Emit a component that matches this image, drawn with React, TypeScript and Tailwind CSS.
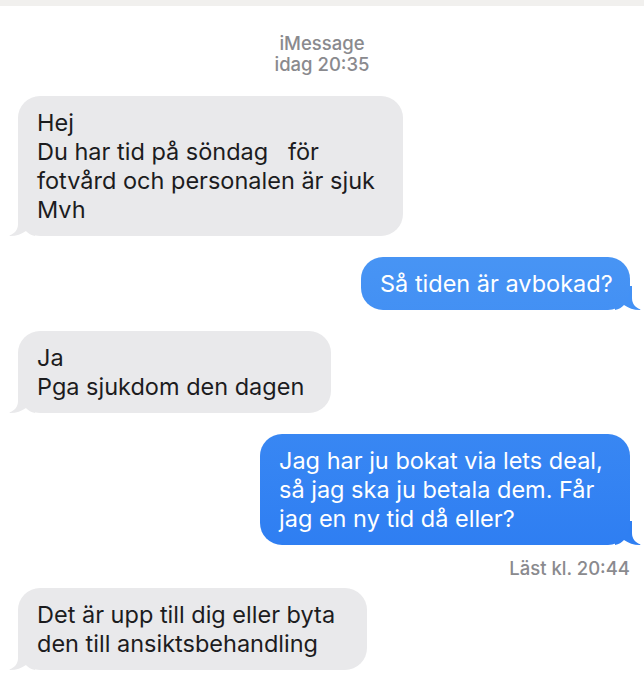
import React from "react";

const font = { fontFamily: "Inter, 'Liberation Sans', Arial, sans-serif" };

function TailLeft() {
  return (
    <svg
      className="absolute bottom-0 left-[-9px]"
      width="26"
      height="24"
      viewBox="0 0 26 24"
    >
      <path
        d="M9 0 L9 12 C9 18 5.5 21.5 1 23.2 C0.3 23.5 0.5 24 1.3 24 C7.5 24 12.5 22 17 19 C19.5 21.5 22 23.3 26 24 L26 0 Z"
        fill="#e9e9eb"
      />
    </svg>
  );
}

function TailRight({ color }: { color: string }) {
  return (
    <svg
      className="absolute bottom-0 right-[-11px]"
      width="26"
      height="24"
      viewBox="0 0 26 24"
    >
      <path
        d="M17 0 L17 12 C17 18 20.5 21.5 25 23.2 C25.7 23.5 25.5 24 24.7 24 C18.5 24 13.5 22 9 19 C6.5 21.5 4 23.3 0 24 L0 0 Z"
        fill={color}
      />
    </svg>
  );
}

function Received({ lines, w }: { lines: string[]; w: string }) {
  return (
    <div className="flex justify-start pl-[18px]">
      <div className={`relative ${w}`}>
        <TailLeft />
        <div className="relative rounded-[22px] bg-[#e9e9eb] px-[19px] py-[12px] text-[23.5px] leading-[29px] text-[#1c1c1e] whitespace-pre">
          {lines.map((l, i) => (
            <div key={i}>{l}</div>
          ))}
        </div>
      </div>
    </div>
  );
}

function Sent({ lines, w, tail }: { lines: string[]; w: string; tail: string }) {
  return (
    <div className="flex justify-end pr-[14px]">
      <div className={`relative ${w}`}>
        <TailRight color={tail} />
        <div className="relative rounded-[22px] bg-fixed bg-[linear-gradient(180deg,#5ea8f6_0px,#2374f1_680px)] px-[19px] py-[12px] text-[23.5px] leading-[29px] text-white whitespace-pre">
          {lines.map((l, i) => (
            <div key={i}>{l}</div>
          ))}
        </div>
      </div>
    </div>
  );
}

export default function App() {
  return (
    <div className="w-[644px] h-[680px] overflow-hidden bg-white" style={font}>
      <div className="h-[6px] bg-[#f1f0ee]" />
      <div className="pt-[27px] flex flex-col items-center text-[18.5px] leading-[21px] text-[#8a8a8e] font-medium">
        <div>iMessage</div>
        <div>idag 20:35</div>
      </div>
      <div className="mt-[21px] flex flex-col">
        <Received
          w="w-[385px]"
          lines={["Hej", "Du har tid på söndag   för", "fotvård och personalen är sjuk", "Mvh"]}
        />
        <div className="mt-[21px]">
          <Sent w="w-[269px]" tail="#4391f5" lines={["Så tiden är avbokad?"]} />
        </div>
        <div className="mt-[21px]">
          <Received w="w-[313px]" lines={["Ja", "Pga sjukdom den dagen"]} />
        </div>
        <div className="mt-[21px]">
          <Sent
            w="w-[370px]"
            tail="#2f7ff2"
            lines={["Jag har ju bokat via lets deal,", "så jag ska ju betala dem. Får", "jag en ny tid då eller?"]}
          />
        </div>
        <div className="pr-[14px] mt-[12px] text-right text-[18.5px] leading-[22px] font-medium text-[#8a8a8e]">
          Läst kl. 20:44
        </div>
        <div className="mt-[9px]">
          <Received
            w="w-[349px]"
            lines={["Det är upp till dig eller byta", "den till ansiktsbehandling"]}
          />
        </div>
      </div>
    </div>
  );
}
